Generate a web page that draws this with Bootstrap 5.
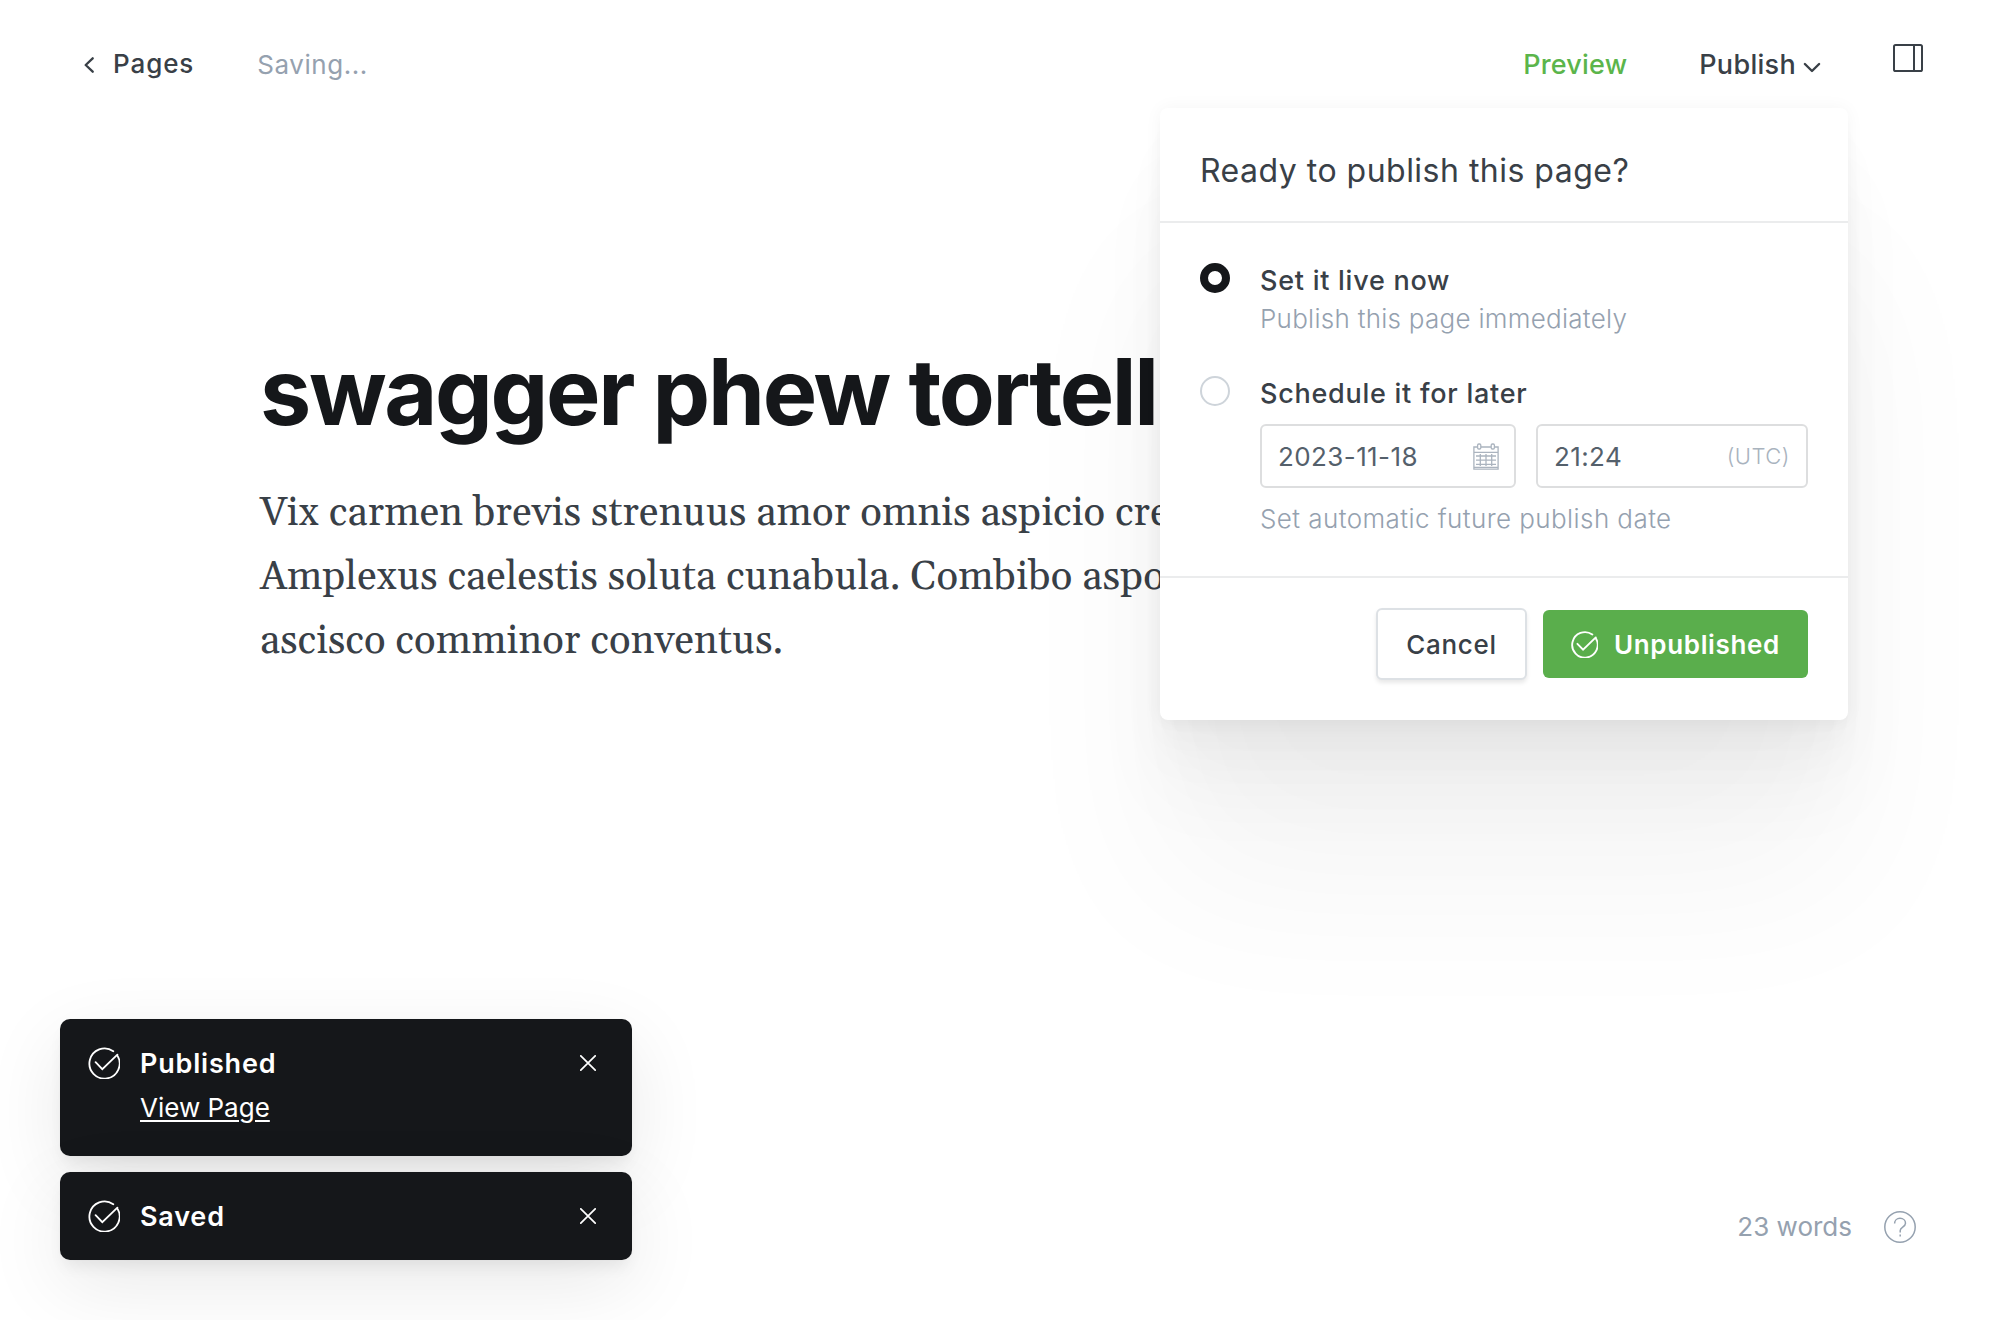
<!DOCTYPE html>
<html lang="en">
<head>
<meta charset="utf-8">
<meta name="viewport" content="width=device-width, initial-scale=1">
<title>swagger phew tortellini</title>
<link href="https://cdn.jsdelivr.net/npm/bootstrap@5.3.0/dist/css/bootstrap.min.css" rel="stylesheet">
<style>
body{width:2000px;height:1320px;overflow:hidden;background:#fff;color:#394047;font-family:Inter,"Liberation Sans",sans-serif;font-size:26px;line-height:38px}
svg{display:block;fill:none;stroke:currentColor;flex:none}
a{color:inherit;text-decoration:none}
.ash{color:#95a1af}
.leaf{color:#5bb54b}

.topbar{height:108px;padding:44px 77px 0 84px}
.back-link{gap:17px;font-weight:500;letter-spacing:.9px;line-height:40px}
.back-icon{margin-top:13px}
.save-state{margin-left:63px;letter-spacing:.55px;line-height:41px}
.top-action{font-size:27px;font-weight:500;letter-spacing:.2px;line-height:41px}
.publish-trigger{gap:7px;margin-left:72px;letter-spacing:.3px}
.caret-icon{margin-top:18px}
.panel-toggle{margin-left:72px}

.editor-area{padding:234px 0 0 260px;width:1400px}
.post-title{font-size:91.5px;font-weight:700;line-height:100px;color:#15171a;letter-spacing:-2.3px;margin:0}
.prose{font-family:Georgia,Gelasio,"Liberation Serif",serif;font-size:40px;line-height:64px;letter-spacing:.2px;margin:40px 0 0}

.publish-menu{left:1160px;top:108px;width:688px;height:612px;border-radius:8px;background:#fff;box-shadow:0 0 18px rgba(0,0,0,.045),0 8px 12px rgba(0,0,0,.01),0 22px 26px rgba(0,0,0,.015),0 40px 50px rgba(0,0,0,.025),0 76px 80px rgba(0,0,0,.03),0 165px 170px rgba(0,0,0,.045)}
.menu-head{height:115px;padding:43px 40px 0;border-bottom:2px solid #ebeced}
.menu-head h2{font-size:32px;font-weight:400;line-height:40px;letter-spacing:.49px;margin:0}
.menu-body{height:353px;padding:39px 40px 0}
.choice{gap:30px}
.choice + .choice{margin-top:37px}
.choice-dot{width:30px;height:30px;border:2px solid #ced4da;border-radius:50%;margin-top:1px;flex:none}
.choice-dot.on{border:8px solid #15171a}
.choice-name{font-size:27px;font-weight:500;letter-spacing:.74px}
.choice-help{font-weight:300;letter-spacing:.27px}
.choice-help.wide{letter-spacing:.42px;margin-top:12px}
.stamp-row{gap:20px;margin-top:11px}
.stamp{height:64px;border:2px solid #dddedf;border-radius:6px;color:#54606b;padding:1px 16px 0;letter-spacing:.4px}
.stamp-date{width:256px;padding-right:15px}
.stamp-time{width:272px}
.stamp-icon{color:#abb4bf}
.zone{font-size:22px;font-weight:300;letter-spacing:.5px;color:#a9b3be;margin-top:-1px}
.menu-foot{padding:30px 40px 0;gap:16px;border-top:2px solid #ebeced}
.btn{--bs-btn-font-size:26px;--bs-btn-line-height:38px;--bs-btn-border-radius:6px;--bs-btn-padding-y:0;--bs-btn-padding-x:0}
.btn-plain{width:151px;height:72px;border:2px solid #dde1e5;background:#fff;color:#394047;font-weight:500;letter-spacing:.7px;padding-top:1px;box-shadow:0 3px 4px rgba(0,0,0,.09)}
.btn-go{width:265px;height:68px;margin-top:2px;border:0;padding:1px 0 0 28px;gap:16px;background:#5aae4c;color:#fff;font-weight:600;letter-spacing:.65px}
.btn-go svg{margin-top:-1px}

.toast-stack{left:60px;top:1019px;width:572px;gap:16px}
.note{background:#15171a;color:#fff;border-radius:10px;padding:26px 36px 0 28px;box-shadow:0 0 2px rgba(0,0,0,.03),0 10px 16px -4px rgba(0,0,0,.07),0 24px 80px rgba(0,0,0,.09)}
.note-tall{height:137px}
.note-short{height:88px}
.note-icon{margin-top:2px}
.note-close{margin-top:10px}
.note-text{margin-left:20px}
.note-text strong{display:block;font-size:27px;font-weight:600;letter-spacing:.8px}
.note-text a{display:block;margin-top:6px;text-decoration:underline;text-decoration-thickness:2px;text-underline-offset:3px}

.word-count{right:84px;bottom:74px;gap:32px}
.word-count svg{margin-top:-1px}
</style>
<script src="https://cdn.jsdelivr.net/npm/bootstrap@5.3.0/dist/js/bootstrap.bundle.min.js"></script>
</head>
<body class="position-relative">
<svg width="0" height="0" class="position-absolute"><defs>
<symbol id="tick" viewBox="0 0 32 32"><path d="M25.3 4.2A15.1 15.1 0 1 0 29.4 8.6M7.6 15.2l6.7 7L29.4 7.6" stroke-linecap="round"/></symbol>
<symbol id="cross" viewBox="0 0 16 16"><path d="M.8.8l14.4 14.4M15.2.8L.8 15.2" stroke-linecap="round"/></symbol>
</defs></svg>

<header class="topbar d-flex align-items-start">
  <a href="#" class="back-link d-flex"><svg class="back-icon" width="12" height="16" viewBox="0 0 12 16" stroke-width="2.3" stroke-linecap="round" stroke-linejoin="round"><path d="M8.700 1.300L1.700 8l7 6.700"/></svg>Pages</a>
  <span class="save-state ash">Saving...</span>
  <a href="#" class="top-action leaf ms-auto">Preview</a>
  <a href="#" class="top-action publish-trigger d-flex">Publish<svg class="caret-icon" width="18" height="12" viewBox="0 0 18 12" stroke-width="2.4" stroke-linecap="round" stroke-linejoin="round"><path d="M1.9 2L9 9l7.1-7"/></svg></a>
  <svg class="panel-toggle" width="30" height="28" viewBox="0 0 30 28" stroke-width="2"><rect x="1" y="1" width="28" height="26" rx="1.6"/><path d="M21 1v26"/></svg>
</header>

<main class="editor-area">
  <h1 class="post-title">swagger phew tortellini</h1>
  <p class="prose text-nowrap">Vix carmen brevis strenuus amor omnis aspicio cre<br>Amplexus caelestis soluta cunabula. Combibo aspor<br>ascisco comminor conventus.</p>
</main>

<section class="publish-menu position-absolute d-flex flex-column">
  <div class="menu-head"><h2>Ready to publish this page?</h2></div>
  <div class="menu-body">
    <div class="choice d-flex">
      <span class="choice-dot on"></span>
      <div>
        <div class="choice-name">Set it live now</div>
        <div class="choice-help ash">Publish this page immediately</div>
      </div>
    </div>
    <div class="choice d-flex">
      <span class="choice-dot"></span>
      <div>
        <div class="choice-name">Schedule it for later</div>
        <div class="stamp-row d-flex">
          <div class="stamp stamp-date d-flex align-items-center justify-content-between">2023-11-18
            <svg class="stamp-icon" width="26" height="28" viewBox="0 0 26 28" stroke-width="1.3"><path d="M4.3 4H.9v22.2h24.2V4h-3.4M8 4h10M.9 9.3h24.2M.9 24.4h24.2M3 13h20M3 17.2h20M3 21.3h20M7.3 11v12M13 11v12M18.7 11v12"/><rect x="4.6" y="1" width="3.2" height="5" rx="1.2"/><rect x="18.2" y="1" width="3.2" height="5" rx="1.2"/></svg>
          </div>
          <div class="stamp stamp-time d-flex align-items-center justify-content-between">21:24<span class="zone">(UTC)</span></div>
        </div>
        <div class="choice-help wide ash">Set automatic future publish date</div>
      </div>
    </div>
  </div>
  <div class="menu-foot d-flex justify-content-end">
    <button type="button" class="btn btn-plain">Cancel</button>
    <button type="button" class="btn btn-go d-flex align-items-center"><svg width="27" height="27" stroke-width="2.2"><use href="#tick"/></svg>Unpublished</button>
  </div>
</section>

<aside class="toast-stack position-absolute d-flex flex-column">
  <div class="note note-tall d-flex align-items-start">
    <svg class="note-icon" width="32" height="32" stroke-width="1.8"><use href="#tick"/></svg>
    <div class="note-text"><strong>Published</strong><a href="#">View Page</a></div>
    <svg class="note-close ms-auto" width="16" height="16" stroke-width="1.7"><use href="#cross"/></svg>
  </div>
  <div class="note note-short d-flex align-items-start">
    <svg class="note-icon" width="32" height="32" stroke-width="1.8"><use href="#tick"/></svg>
    <div class="note-text"><strong>Saved</strong></div>
    <svg class="note-close ms-auto" width="16" height="16" stroke-width="1.7"><use href="#cross"/></svg>
  </div>
</aside>

<footer class="word-count ash position-absolute d-flex align-items-center">23 words
  <svg width="32" height="32" viewBox="0 0 32 32" stroke-width="1.5"><circle cx="16" cy="16" r="15.2"/><path d="M10.6 12.4c0-3 2.4-5.1 5.4-5.1 3.200 0 5.500 2.100 5.500 4.900 0 3.700-5.300 4-5.300 7.200v2.200M16.200 23.500v2"/></svg>
</footer>
</body>
</html>
